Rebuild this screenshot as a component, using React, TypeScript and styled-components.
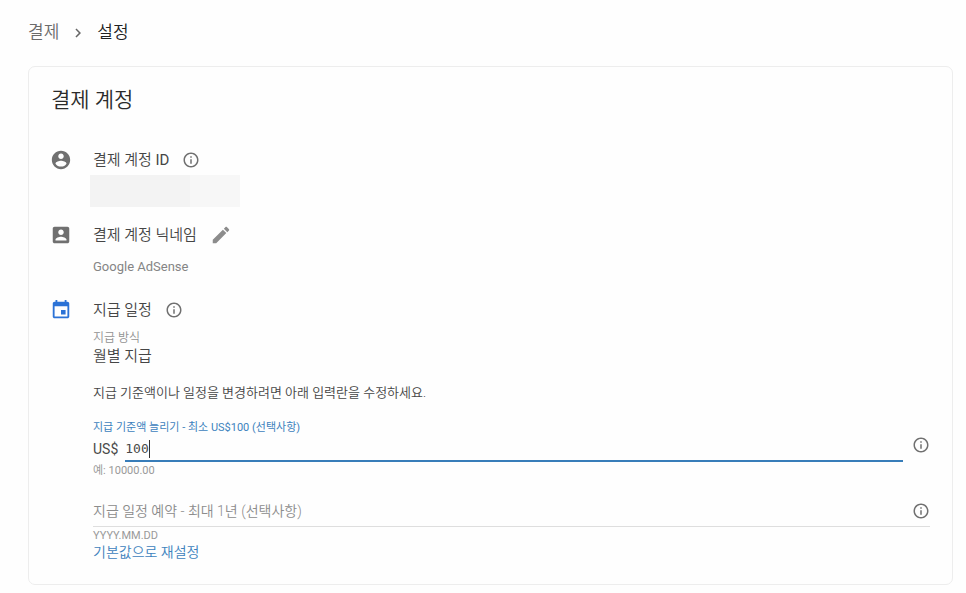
import React, { useState } from "react";
import styled, { createGlobalStyle } from "styled-components";

const GlobalStyle = createGlobalStyle`
  *, *::before, *::after { box-sizing: border-box; }
  body {
    margin: 0;
    background: #fefefe;
    color: #4a4a4a;
    font-family: Roboto, "Noto Sans CJK KR", sans-serif;
    font-weight: 350;
  }
`;

const Page = styled.main`
  padding: 20px 13px 8px 28px;
`;

const Breadcrumb = styled.nav`
  display: flex;
  align-items: center;
  height: 24px;
  margin-bottom: 22px;
  font-size: 17px;
  line-height: 24px;
`;

const CrumbLink = styled.a`
  color: #6b6b6b;
  text-decoration: none;
`;

const CrumbCurrent = styled.span`
  color: #212121;
`;

const Chevron = styled.svg`
  width: 18px;
  height: 18px;
  margin: 2px 10px 0;
  fill: #666;
`;

const Card = styled.section`
  padding: 19px 22px 24px;
  border: 1px solid #ededed;
  border-radius: 7px;
  background: #fefefe;
`;

const CardTitle = styled.h1`
  margin: 0 0 35px;
  color: #2b2b2b;
  font-size: 21px;
  font-weight: 350;
  line-height: 28px;
`;

const Entry = styled.section`
  display: grid;
  grid-template-columns: 20px minmax(0, 1fr);
  column-gap: 22px;
  & + & {
    margin-top: 17px;
  }
`;

const EntryIcon = styled.svg<{ $accent?: boolean }>`
  width: 22px;
  height: 22px;
  margin: 0 -1px;
  fill: ${(p) => (p.$accent ? "#2b72d6" : "#707070")};
`;

const EntryHead = styled.div`
  display: flex;
  align-items: center;
  height: 22px;
  gap: 13px;
`;

const EntryTitle = styled.h2`
  margin: 0;
  color: #454545;
  font-size: 15px;
  font-weight: 350;
  line-height: 22px;
`;

const Latin = styled.span`
  font-weight: 400;
`;

const IconButton = styled.button`
  display: flex;
  flex: none;
  padding: 0;
  border: 0;
  background: none;
  cursor: pointer;
`;

const Glyph = styled.svg<{ $size: number; $color: string }>`
  width: ${(p) => p.$size}px;
  height: ${(p) => p.$size}px;
  fill: ${(p) => p.$color};
`;

const Redacted = styled.div`
  width: 150px;
  height: 32px;
  margin: 4px 0 0 -3px;
  background: linear-gradient(to right, #f3f3f3 100px, #f7f7f7 100px);
`;

const Nickname = styled.p`
  margin: 11px 0 0;
  color: #858585;
  font-size: 13px;
  font-weight: 400;
  line-height: 20px;
  height: 25px;
`;

const MethodLabel = styled.p`
  margin: 9px 0 0;
  color: #929292;
  font-size: 12px;
  line-height: 16px;
`;

const MethodValue = styled.p`
  margin: 0;
  color: #454545;
  font-size: 15px;
  line-height: 20px;
`;

const Help = styled.p`
  margin: 19px 0;
  color: #454545;
  font-size: 13px;
  line-height: 16px;
`;

const Field = styled.div`
  display: grid;
  grid-template-columns: minmax(0, 1fr) 18px;
  column-gap: 9px;
`;

const FieldLabel = styled.label`
  grid-column: 1 / -1;
  color: #3d82bd;
  font-size: 11px;
  font-weight: 400;
  line-height: 16px;
`;

const AmountRow = styled.div`
  display: flex;
  align-items: flex-start;
  height: 26px;
  font-size: 14px;
  font-weight: 400;
  line-height: 26px;
  gap: 7px;
`;

const AmountBox = styled.div`
  position: relative;
  flex: 1;
  height: 26px;
  border-bottom: 2px solid #387db9;
  font: 13px/24px "DejaVu Sans Mono", monospace;
`;

const AmountInput = styled.input`
  display: block;
  width: 100%;
  height: 24px;
  padding: 2px 0 0;
  border: 0;
  outline: 0;
  background: none;
  color: #4a4a4a;
  caret-color: transparent;
  font: inherit;
`;

const Caret = styled.span`
  position: absolute;
  left: 3ch;
  top: 4px;
  width: 1px;
  height: 18px;
  background: #333;
`;

const Hint = styled.p`
  margin: 0;
  color: #999;
  font-size: 11px;
  font-weight: 400;
  line-height: 17px;
`;

const ScheduleField = styled.div`
  display: flex;
  align-items: center;
  height: 32px;
  margin-top: 16px;
  border-bottom: 1px solid #dedede;
`;

const ScheduleInput = styled.input`
  flex: 1;
  min-width: 0;
  height: 30px;
  padding: 0;
  border: 0;
  outline: 0;
  background: none;
  color: #4a4a4a;
  font: inherit;
  font-size: 14px;
  &::placeholder {
    color: #8c8c8c;
    opacity: 1;
  }
`;

const ResetLink = styled.a`
  align-self: flex-start;
  color: #3d82bd;
  font-size: 14px;
  line-height: 16px;
  text-decoration: none;
`;

const EntryBody = styled.div`
  display: flex;
  flex-direction: column;
`;

const INFO =
  "M11 7h2v2h-2zm0 4h2v6h-2zm1-9C6.48 2 2 6.48 2 12s4.48 10 10 10 10-4.48 10-10S17.52 2 12 2zm0 18c-4.41 0-8-3.59-8-8s3.59-8 8-8 8 3.59 8 8-3.59 8-8 8z";
const ACCOUNT =
  "M12 2C6.48 2 2 6.48 2 12s4.48 10 10 10 10-4.48 10-10S17.52 2 12 2zm0 3c1.66 0 3 1.34 3 3s-1.34 3-3 3-3-1.34-3-3 1.34-3 3-3zm0 14.2c-2.5 0-4.71-1.28-6-3.22.03-1.99 4-3.08 6-3.08 1.99 0 5.97 1.09 6 3.08-1.29 1.94-3.5 3.22-6 3.22z";
const ACCOUNT_BOX =
  "M3 5v14c0 1.1.89 2 2 2h14c1.1 0 2-.9 2-2V5c0-1.1-.9-2-2-2H5c-1.11 0-2 .9-2 2zm12 4c0 1.66-1.34 3-3 3s-3-1.34-3-3 1.34-3 3-3 3 1.34 3 3zm-9 8c0-2 4-3.1 6-3.1s6 1.1 6 3.1v1H6v-1z";
const EVENT =
  "M17 12h-5v5h5v-5zM16 1v2H8V1H6v2H5c-1.11 0-1.99.9-1.99 2L3 19c0 1.1.89 2 2 2h14c1.1 0 2-.9 2-2V5c0-1.1-.9-2-2-2h-1V1h-2zm3 18H5V8h14v11z";
const PENCIL =
  "M3 17.25V21h3.75L17.81 9.94l-3.75-3.75L3 17.25zM20.71 7.04c.39-.39.39-1.02 0-1.41l-2.34-2.34c-.39-.39-1.02-.39-1.41 0l-1.83 1.83 3.75 3.75 1.83-1.83z";

const InfoButton = ({ label }: { label: string }) => (
  <IconButton type="button" aria-label={label}>
    <Glyph viewBox="0 0 24 24" $size={18} $color="#707070">
      <path d={INFO} />
    </Glyph>
  </IconButton>
);

export default function App() {
  const [amount, setAmount] = useState("100");
  const [date, setDate] = useState("");
  return (
    <>
      <GlobalStyle />
      <Page>
        <Breadcrumb>
          <CrumbLink href="#">결제</CrumbLink>
          <Chevron viewBox="0 0 24 24">
            <path d="M10 6 8.59 7.41 13.17 12l-4.58 4.59L10 18l6-6z" />
          </Chevron>
          <CrumbCurrent aria-current="page">설정</CrumbCurrent>
        </Breadcrumb>
        <Card>
          <CardTitle>결제 계정</CardTitle>
          <Entry>
            <EntryIcon viewBox="0 0 24 24">
              <path d={ACCOUNT} />
            </EntryIcon>
            <EntryBody>
              <EntryHead>
                <EntryTitle>
                  결제 계정 <Latin>ID</Latin>
                </EntryTitle>
                <InfoButton label="결제 계정 ID" />
              </EntryHead>
              <Redacted />
            </EntryBody>
          </Entry>
          <Entry>
            <EntryIcon viewBox="0 0 24 24">
              <path d={ACCOUNT_BOX} />
            </EntryIcon>
            <EntryBody>
              <EntryHead>
                <EntryTitle>결제 계정 닉네임</EntryTitle>
                <IconButton type="button" aria-label="결제 계정 닉네임">
                  <Glyph viewBox="0 0 24 24" $size={22} $color="#8c8c8c">
                    <path d={PENCIL} />
                  </Glyph>
                </IconButton>
              </EntryHead>
              <Nickname>Google AdSense</Nickname>
            </EntryBody>
          </Entry>
          <Entry>
            <EntryIcon viewBox="0 0 24 24" $accent>
              <path d={EVENT} />
            </EntryIcon>
            <EntryBody>
              <EntryHead>
                <EntryTitle>지급 일정</EntryTitle>
                <InfoButton label="지급 일정" />
              </EntryHead>
              <MethodLabel>지급 방식</MethodLabel>
              <MethodValue>월별 지급</MethodValue>
              <Help>지급 기준액이나 일정을 변경하려면 아래 입력란을 수정하세요.</Help>
              <Field>
                <FieldLabel htmlFor="amount">지급 기준액 늘리기 - 최소 US$100 (선택사항)</FieldLabel>
                <AmountRow>
                  <span>US$</span>
                  <AmountBox>
                    <AmountInput
                      id="amount"
                      value={amount}
                      onChange={(e) => setAmount(e.target.value)}
                    />
                    <Caret />
                  </AmountBox>
                </AmountRow>
                <InfoButton label="지급 기준액" />
              </Field>
              <Hint>예: 10000.00</Hint>
              <ScheduleField>
                <ScheduleInput
                  aria-label="지급 일정 예약"
                  placeholder="지급 일정 예약 - 최대 1년 (선택사항)"
                  value={date}
                  onChange={(e) => setDate(e.target.value)}
                />
                <InfoButton label="지급 일정 예약" />
              </ScheduleField>
              <Hint>YYYY.MM.DD</Hint>
              <ResetLink href="#">기본값으로 재설정</ResetLink>
            </EntryBody>
          </Entry>
        </Card>
      </Page>
    </>
  );
}
